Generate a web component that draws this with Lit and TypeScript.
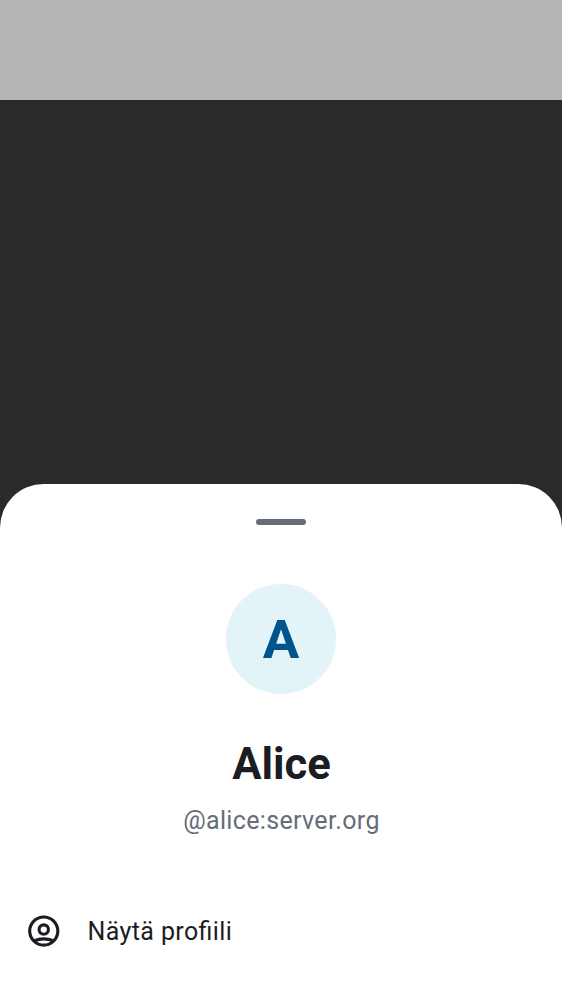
import { LitElement, html, css } from "lit";
import { customElement } from "lit/decorators.js";

@customElement("app-root")
export class AppRoot extends LitElement {
  static styles = css`
    :host {
      display: block;
      height: 1000px;
      overflow: hidden;
      font-family: Roboto, sans-serif;
      color: #1b1d22;
    }
    .screen {
      display: flex;
      flex-direction: column;
      height: 1000px;
      background: #292a2c;
    }
    .top {
      height: 100px;
      flex: none;
      background: #b4b5b7;
    }
    .scrim {
      flex: 1;
    }
    .sheet {
      height: 515.6px;
      flex: none;
      background: #fff;
      border-radius: 43.7px 43.7px 0 0;
      display: flex;
      flex-direction: column;
      align-items: center;
    }
    .handle {
      width: 50px;
      height: 6px;
      margin-top: 34.6px;
      border-radius: 3px;
      background: #656d77;
    }
    .avatar {
      box-sizing: border-box;
      width: 109.3px;
      height: 109.3px;
      margin-top: 59.3px;
      padding-top: 2px;
      border-radius: 50%;
      background: #e3f4f9;
      color: #00548c;
      display: flex;
      align-items: center;
      justify-content: center;
      font-weight: 700;
      font-size: 54.4px;
      line-height: 64px;
    }
    .name {
      margin: 44px 0 0;
      padding-left: 1px;
      font-size: 43.6px;
      line-height: 54px;
      font-weight: 700;
    }
    .id {
      margin-top: 10px;
      padding-left: 1px;
      font-size: 25px;
      line-height: 37px;
      letter-spacing: 0.34px;
      color: #656d77;
    }
    .action {
      align-self: stretch;
      display: flex;
      align-items: center;
      gap: 25px;
      margin-top: 65.5px;
      padding: 8px 25px;
      font-size: 25px;
      line-height: 37px;
      letter-spacing: 0.39px;
      font-feature-settings: "liga" 1;
    }
    .label {
      padding-top: 1px;
    }
    .icon {
      width: 37.5px;
      height: 37.5px;
      flex: none;
    }
  `;

  render() {
    return html`
      <div class="screen">
        <div class="top"></div>
        <div class="scrim"></div>
        <section class="sheet">
          <div class="handle"></div>
          <div class="avatar">A</div>
          <h1 class="name">Alice</h1>
          <div class="id">@alice:server.org</div>
          <div class="action">
            <svg class="icon" viewBox="0 -0.2 24 24" fill="none" stroke="currentColor" stroke-width="2">
              <circle cx="12" cy="12" r="9"></circle>
              <circle cx="12" cy="11" r="3"></circle>
              <path d="M6 18.2Q8.8 17 12 17T18 18.2" stroke-width="2.1"></path>
            </svg>
            <span class="label">Näytä profiili</span>
          </div>
        </section>
      </div>
    `;
  }
}
